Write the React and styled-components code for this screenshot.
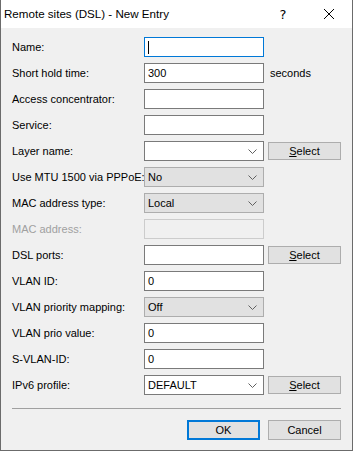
import React from "react";
import styled, { createGlobalStyle, css } from "styled-components";

const Global = createGlobalStyle`
  html, body { margin: 0; padding: 0; background: #f0f0f0; }
  body { font-family: "Liberation Sans", Arial, sans-serif; }
  * { box-sizing: border-box; }
`;

const Window = styled.div`
  width: 353px;
  height: 451px;
  display: flex;
  flex-direction: column;
  background: #f0f0f0;
  border: 1px solid #6b6b6b;
  border-top: none;
  overflow: hidden;
`;

const TitleBar = styled.div`
  height: 28px;
  flex: none;
  background: #ffffff;
  display: flex;
  align-items: center;
  padding-left: 3px;
`;

const Caption = styled.div`
  flex: 1;
  font-family: "Liberation Sans", Arial, sans-serif;
  font-size: 11.6px;
  color: #000;
  padding-bottom: 2px;
`;

const TitleButton = styled.div`
  width: 46px;
  height: 28px;
  display: flex;
  align-items: center;
  justify-content: center;
  font-family: "DejaVu Sans", sans-serif;
  font-size: 13px;
  color: #000;
`;

const Body = styled.div`
  flex: 1;
  display: flex;
  flex-direction: column;
  padding: 9px 11px 0 11px;
`;

const Form = styled.div`
  display: grid;
  grid-template-columns: 132px 120px 1fr;
  grid-auto-rows: 20px;
  row-gap: 6px;
  align-items: center;
`;

const Label = styled.div`
  font-size: 11px;
  color: ${(p) => (p.$disabled ? "#a0a0a0" : "#000")};
  white-space: nowrap;
  padding-bottom: 1px;
`;

const fieldBase = css`
  height: 20px;
  width: 120px;
  display: flex;
  align-items: center;
  padding: 0 3px;
  font-size: 11px;
  color: #000;
  position: relative;
`;

const TextBox = styled.div`
  ${fieldBase};
  background: ${(p) => (p.$disabled ? "#f0f0f0" : "#fff")};
  border: 1px solid
    ${(p) => (p.$focused ? "#0078d7" : p.$disabled ? "#cccccc" : "#7a7a7a")};
`;

const Caret = styled.span`
  width: 1px;
  height: 13px;
  background: #000;
`;

const Combo = styled.div`
  ${fieldBase};
  justify-content: space-between;
  padding-right: 6px;
  background: ${(p) => (p.$list ? "#e1e1e1" : "#fff")};
  border: 1px solid ${(p) => (p.$list ? "#adadad" : "#7a7a7a")};
`;

const Side = styled.div`
  padding-left: 4px;
  display: flex;
  align-items: center;
`;

const Unit = styled.span`
  font-size: 11px;
  color: #000;
  padding-left: 2px;
`;

const Button = styled.div`
  width: 73px;
  height: ${(p) => (p.$small ? "18px" : "20px")};
  background: #e1e1e1;
  border: ${(p) => (p.$default ? "2px solid #0078d7" : "1px solid #adadad")};
  display: flex;
  align-items: center;
  justify-content: center;
  font-size: 11px;
  color: #000;
  padding-bottom: 1px;
`;

const Separator = styled.div`
  height: 1px;
  background: #a0a0a0;
  margin-top: 13px;
`;

const Footer = styled.div`
  display: flex;
  justify-content: flex-end;
  gap: 8px;
  margin-top: 11px;
`;

const Chevron = () => (
  <svg width="9" height="5" viewBox="0 0 9 5">
    <polyline points="0.5,0.5 4.5,4.5 8.5,0.5" fill="none" stroke="#606060" strokeWidth="1" />
  </svg>
);

const CloseIcon = () => (
  <svg width="10" height="10" viewBox="0 0 10 10">
    <path d="M0 0 L10 10 M10 0 L0 10" stroke="#000" strokeWidth="1" />
  </svg>
);

const SelectButton = () => (
  <Side>
    <Button $small>
      <span>
        <u>S</u>elect
      </span>
    </Button>
  </Side>
);

const rows = [
  { label: "Name:", kind: "text", focused: true },
  { label: "Short hold time:", kind: "text", value: "300", unit: "seconds" },
  { label: "Access concentrator:", kind: "text" },
  { label: "Service:", kind: "text" },
  { label: "Layer name:", kind: "combo", select: true },
  { label: "Use MTU 1500 via PPPoE:", kind: "list", value: "No" },
  { label: "MAC address type:", kind: "list", value: "Local" },
  { label: "MAC address:", kind: "text", disabled: true },
  { label: "DSL ports:", kind: "text", select: true },
  { label: "VLAN ID:", kind: "text", value: "0" },
  { label: "VLAN priority mapping:", kind: "list", value: "Off" },
  { label: "VLAN prio value:", kind: "text", value: "0" },
  { label: "S-VLAN-ID:", kind: "text", value: "0" },
  { label: "IPv6 profile:", kind: "combo", value: "DEFAULT", select: true },
];

export default function App() {
  return (
    <>
      <Global />
      <Window>
        <TitleBar>
          <Caption>Remote sites (DSL) - New Entry</Caption>
          <TitleButton>?</TitleButton>
          <TitleButton>
            <CloseIcon />
          </TitleButton>
        </TitleBar>
        <Body>
          <Form>
            {rows.map((r) => (
              <React.Fragment key={r.label}>
                <Label $disabled={r.disabled}>{r.label}</Label>
                {r.kind === "text" ? (
                  <TextBox $focused={r.focused} $disabled={r.disabled}>
                    {r.focused ? <Caret /> : r.value}
                  </TextBox>
                ) : (
                  <Combo $list={r.kind === "list"}>
                    <span>{r.value}</span>
                    <Chevron />
                  </Combo>
                )}
                {r.select ? (
                  <SelectButton />
                ) : r.unit ? (
                  <Side>
                    <Unit>{r.unit}</Unit>
                  </Side>
                ) : (
                  <div />
                )}
              </React.Fragment>
            ))}
          </Form>
          <Separator />
          <Footer>
            <Button $default>OK</Button>
            <Button>Cancel</Button>
          </Footer>
        </Body>
      </Window>
    </>
  );
}
